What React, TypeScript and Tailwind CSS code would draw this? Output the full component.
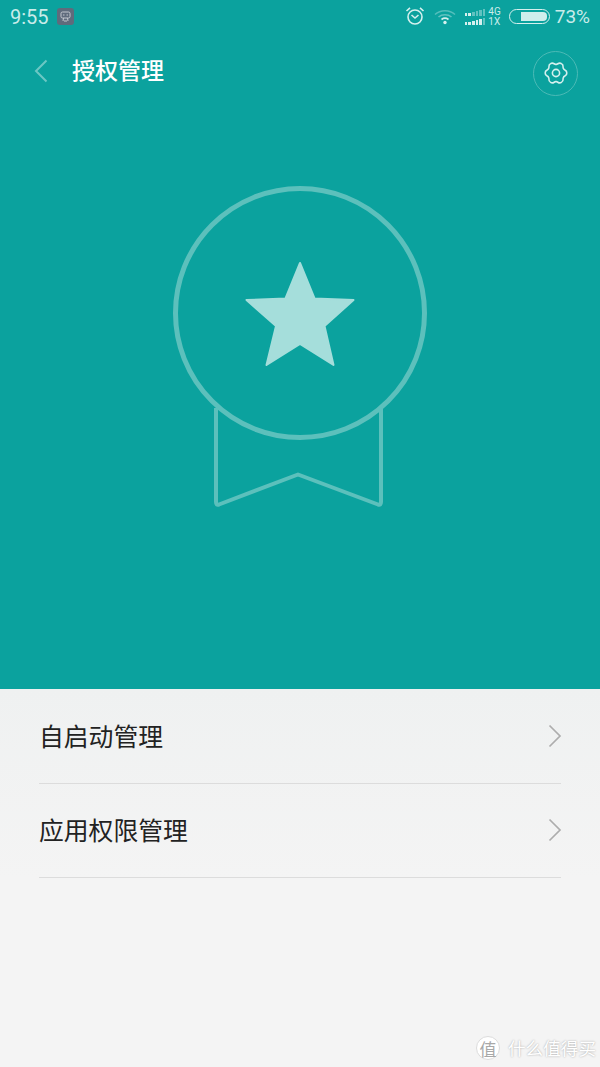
import React from 'react';

const cjk = { fontFamily: '"Noto Sans CJK SC", sans-serif' };

// six lobed outline of the settings gear
const gearPath = () => {
  let d = '';
  for (let k = 0; k < 6; k++) {
    const a = (k * Math.PI) / 3;
    const b = a + Math.PI / 6;
    const c = a + Math.PI / 3;
    const p = (r: number, t: number) => `${(12 + r * Math.cos(t)).toFixed(2)} ${(12 + r * Math.sin(t)).toFixed(2)}`;
    if (k === 0) d += `M${p(10.8, a)} `;
    d += `C${p(11.6, a + 0.3)} ${p(8.2, b - 0.2)} ${p(8.7, b)} `;
    d += `C${p(8.2, b + 0.2)} ${p(11.6, c - 0.3)} ${p(10.8, c)} `;
  }
  return d + 'Z';
};

const Chevron = () => (
  <svg width="14" height="24" viewBox="0 0 14 24" fill="none" stroke="#adadad" strokeWidth="1.7">
    <path d="M1.5 1.5 L12 12 L1.5 22.5" />
  </svg>
);

const SignalBars = ({ full }: { full: number }) => (
  <div className="flex items-end gap-[1px]">
    {[3, 3, 4, 5, 6, 7].map((h, i) => (
      <div
        key={i}
        className="w-[2.6px]"
        style={{ height: h, backgroundColor: i < full ? '#d5f0ee' : 'rgba(255,255,255,0.35)' }}
      />
    ))}
  </div>
);

const StatusBar = () => (
  <div className="flex h-[33px] items-center justify-between pl-[10px] pr-[10px] text-[#c9ecea]">
    <div className="flex items-center gap-[8px]">
      <span className="text-[20px] leading-none" style={{ fontFamily: 'Roboto, sans-serif' }}>9:55</span>
      <div className="flex h-[17px] w-[17px] items-center justify-center rounded-[3px] bg-[#5f6b7c]">
        <svg width="11" height="11" viewBox="0 0 11 11" fill="none" stroke="#c4c8cf" strokeWidth="1">
          <rect x="1" y="1" width="9" height="6" rx="1.5" />
          <path d="M3.5 7 L3 10 M7.5 7 L8 10 M3 4h1.5M6.5 4H8M4 10h3" />
        </svg>
      </div>
    </div>
    <div className="flex items-center">
      <svg width="20" height="20" viewBox="0 0 20 20" fill="none" stroke="#d5f0ee" strokeWidth="1.6" className="mr-[9px] -translate-y-[1px]">
        <circle cx="10" cy="11" r="7" />
        <path d="M6.5 9 L10 12 L13.5 9 M1.5 5 L5 1.8 M18.5 5 L15 1.8" />
      </svg>
      <svg width="22" height="16" viewBox="0 0 22 16" fill="none" className="mr-[9px]">
        <path d="M1 5.5 C6.5 0.5 15.5 0.5 21 5.5" stroke="rgba(255,255,255,0.3)" strokeWidth="1.6" />
        <path d="M4.5 8 C8 5 14 5 17.5 8" stroke="rgba(255,255,255,0.35)" strokeWidth="1.6" />
        <path d="M7.5 10.5 C9.5 9 12.5 9 14.5 10.5" stroke="#d5f0ee" strokeWidth="1.6" />
        <circle cx="11" cy="13.5" r="1.7" fill="#d5f0ee" />
      </svg>
      <div className="mr-[3px] flex flex-col gap-[2px]">
        <SignalBars full={2} />
        <SignalBars full={5} />
      </div>
      <div className="mr-[8px] flex flex-col text-[10px] leading-[10px]" style={{ fontFamily: 'Roboto, sans-serif' }}>
        <span>4G</span>
        <span>1X</span>
      </div>
      <div className="mr-[5px] flex h-[15px] w-[41px] items-center rounded-full border border-[#d5f0ee] pl-[11px] pr-[2px]">
        <div className="h-[9px] w-[26px] rounded-r-[4px] bg-[#cfeeec]" />
      </div>
      <span className="text-[19px] leading-none" style={{ fontFamily: 'Roboto, sans-serif' }}>73%</span>
    </div>
  </div>
);

const Header = () => (
  <div className="flex h-[77px] items-center justify-between pl-[34px] pr-[22px]">
    <div className="mb-[3px] flex items-center">
      <svg width="14" height="24" viewBox="0 0 14 24" fill="none" stroke="#6cc7c4" strokeWidth="2" className="mt-[1px]">
        <path d="M12.5 1.5 L2 12 L12.5 22.5" />
      </svg>
      <span className="ml-[24px] pb-[1px] text-[23px] font-medium leading-none text-white" style={cjk}>授权管理</span>
    </div>
    <div className="mt-[3px] flex h-[45px] w-[45px] items-center justify-center rounded-full border border-[#4cbab6]">
      <svg width="24" height="24" viewBox="0 0 24 24" fill="none" stroke="#d5f0ee" strokeWidth="1.6" strokeLinejoin="round">
        <path d={gearPath()} />
        <circle cx="12" cy="12" r="3.6" />
      </svg>
    </div>
  </div>
);

const Medal = () => (
  <svg width="280" height="340" viewBox="160 180 280 340" fill="none" className="mx-auto mt-[70px]">
    <path
      d="M216 408 V502 Q216 505.5 219 504.5 L298 474.5 L378 504.5 Q381 505.5 381 502 V408"
      stroke="#5cc0bc"
      strokeWidth="4"
      strokeLinejoin="round"
    />
    <circle cx="300" cy="313" r="124.5" stroke="#5cc0bc" strokeWidth="5" />
    <path
      d="M300 263 L314.5 298.5 L353.5 300 L324.5 326 L333.5 365 L300 344 L266.5 365 L276 326 L246.5 300 L285.5 298.5 Z"
      fill="#a5dedb"
      stroke="#a5dedb"
      strokeWidth="2"
      strokeLinejoin="round"
    />
  </svg>
);

const Row = ({ label }: { label: string }) => (
  <div className="flex h-[94px] items-center justify-between border-b border-[#dcdcdc] pb-[2px]">
    <span className="text-[24.8px] leading-none text-[#222222]" style={cjk}>{label}</span>
    <span className="translate-x-[1px]"><Chevron /></span>
  </div>
);

export default function App() {
  return (
    <div className="relative flex h-[1067px] w-[600px] flex-col overflow-hidden bg-[#f4f4f4]">
      <div className="h-[689px] bg-[#0ba29e]">
        <StatusBar />
        <Header />
        <Medal />
      </div>
      <div className="bg-gradient-to-b from-[#eff1f1] to-[#f4f4f4] px-[39px] pt-[1px]">
        <Row label="自启动管理" />
        <Row label="应用权限管理" />
      </div>
      <div className="flex-1" />
      {/* watermark */}
      <div className="absolute bottom-[7px] right-[4px] flex items-center gap-[8px] text-white" style={cjk}>
        <div className="flex h-[24px] w-[24px] items-center justify-center rounded-full border border-[#dcdcdc] bg-white text-[17px] leading-none text-[#a8a8a8]">
          值
        </div>
        <span className="text-[17.6px] leading-none [text-shadow:0_0_2px_rgba(0,0,0,0.35)]">什么值得买</span>
      </div>
    </div>
  );
}
